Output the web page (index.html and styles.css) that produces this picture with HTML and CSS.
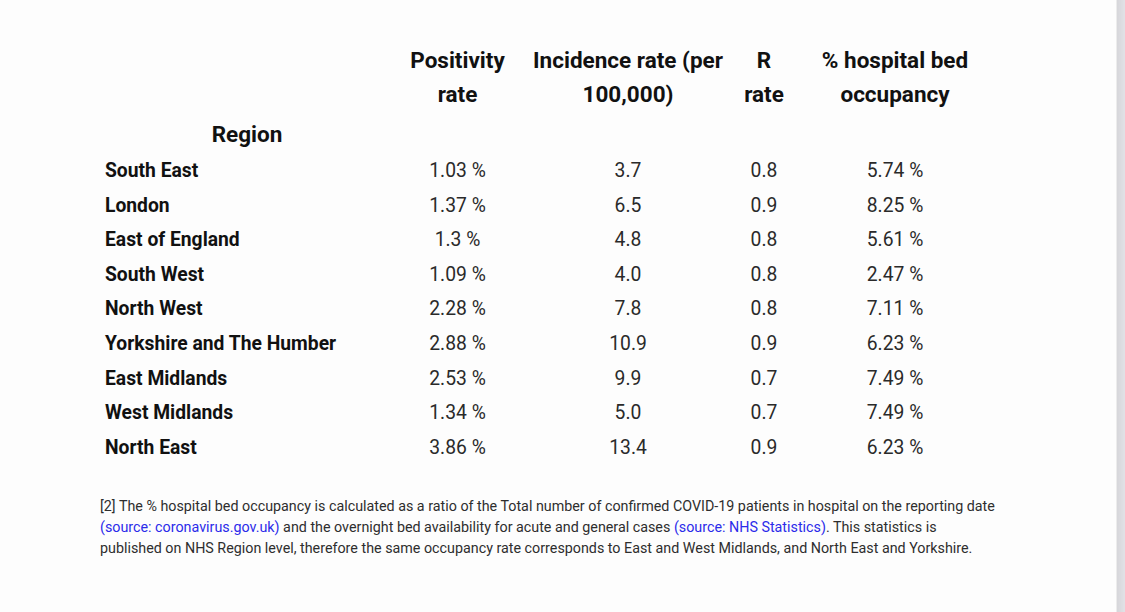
FILE: index.html
```html
<!DOCTYPE html>
<html lang="en">
<head>
    <meta charset="UTF-8">
    <meta name="viewport" content="width=device-width, initial-scale=1.0">
    <title>Regional COVID-19 indicators</title>
    <link rel="stylesheet" href="styles.css">
</head>
<body>
    <div class="page">
        <div class="sheet">
            <table class="region-table">
                <colgroup>
                    <col class="col-region">
                    <col class="col-positivity">
                    <col class="col-incidence">
                    <col class="col-r">
                    <col class="col-beds">
                </colgroup>
                <thead>
                    <tr class="head-top">
                        <th></th>
                        <th>Positivity<br>rate</th>
                        <th>Incidence rate (per<br>100,000)</th>
                        <th>R<br>rate</th>
                        <th>% hospital bed<br>occupancy</th>
                    </tr>
                    <tr class="head-region">
                        <th>Region</th>
                        <th></th>
                        <th></th>
                        <th></th>
                        <th></th>
                    </tr>
                </thead>
                <tbody>
                    <tr><td>South East</td><td>1.03 %</td><td>3.7</td><td>0.8</td><td>5.74 %</td></tr>
                    <tr><td>London</td><td>1.37 %</td><td>6.5</td><td>0.9</td><td>8.25 %</td></tr>
                    <tr><td>East of England</td><td>1.3 %</td><td>4.8</td><td>0.8</td><td>5.61 %</td></tr>
                    <tr><td>South West</td><td>1.09 %</td><td>4.0</td><td>0.8</td><td>2.47 %</td></tr>
                    <tr><td>North West</td><td>2.28 %</td><td>7.8</td><td>0.8</td><td>7.11 %</td></tr>
                    <tr><td>Yorkshire and The Humber</td><td>2.88 %</td><td>10.9</td><td>0.9</td><td>6.23 %</td></tr>
                    <tr><td>East Midlands</td><td>2.53 %</td><td>9.9</td><td>0.7</td><td>7.49 %</td></tr>
                    <tr><td>West Midlands</td><td>1.34 %</td><td>5.0</td><td>0.7</td><td>7.49 %</td></tr>
                    <tr><td>North East</td><td>3.86 %</td><td>13.4</td><td>0.9</td><td>6.23 %</td></tr>
                </tbody>
            </table>

            <p class="footnote">
                [2] The % hospital bed occupancy is calculated as a ratio of the Total number of confirmed COVID-19 patients in hospital on the reporting date<br>
                <a href="#">(source: coronavirus.gov.uk)</a> and the overnight bed availability for acute and general cases <a href="#">(source: NHS Statistics)</a>. This statistics is<br>
                published on NHS Region level, therefore the same occupancy rate corresponds to East and West Midlands, and North East and Yorkshire.
            </p>
        </div>
        <div class="edge"></div>
    </div>
</body>
</html>
```

FILE: styles.css
```css
html, body {
    margin: 0;
    height: 100%;
}

body {
    background-color: #fdfdfd;
    font-family: Roboto, "Liberation Sans", sans-serif;
    color: #1a1a1a;
    overflow: hidden;
}

.page {
    display: flex;
    height: 612px;
}

.sheet {
    flex: 1;
    padding: 43px 0 0 97px;
}

.edge {
    width: 8px;
    border-left: 1px solid #ececec;
    background: linear-gradient(to right, #d6d6da, #e2e2e6);
}

.region-table {
    border-collapse: collapse;
    table-layout: fixed;
    width: 903px;
}

.col-region { width: 300px; }
.col-positivity { width: 121px; }
.col-incidence { width: 220px; }
.col-r { width: 52px; }
.col-beds { width: 210px; }

.region-table th,
.region-table td {
    padding: 0;
    text-align: center;
    white-space: nowrap;
}

.region-table th {
    font-size: 22.5px;
    font-weight: bold;
    line-height: 34px;
    color: #111;
}

.head-region th {
    padding: 6px 0 3px;
}

.region-table td {
    font-size: 19.3px;
    line-height: 34.6px;
    color: #2a2a2a;
}

.region-table td:first-child {
    text-align: left;
    padding-left: 8px;
    font-weight: bold;
    color: #111;
}

.footnote {
    margin: 31px 0 0 3px;
    font-size: 14.3px;
    line-height: 21px;
    color: #2e2e2e;
}

.footnote a {
    color: #2b2bea;
    text-decoration: none;
}
```
